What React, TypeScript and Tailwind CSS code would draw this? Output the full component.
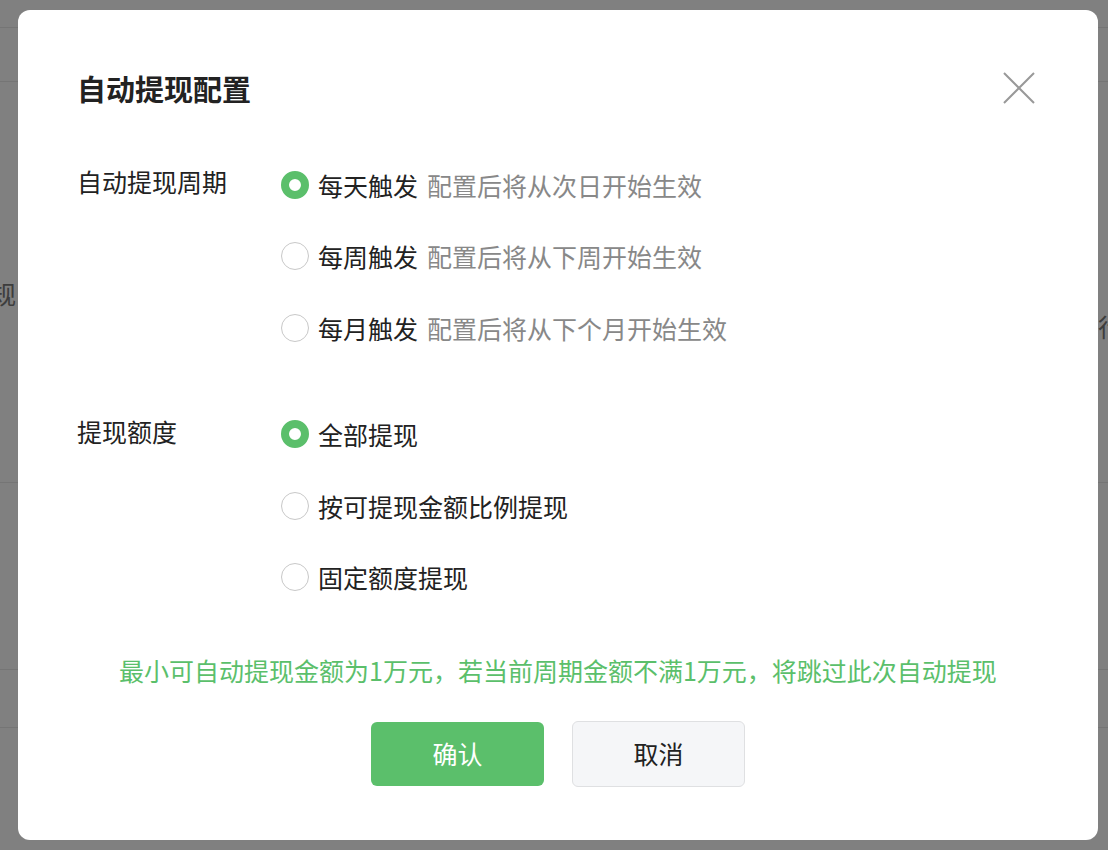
import React, { useState } from 'react'

const font = { fontFamily: '"Noto Sans CJK SC", "Noto Sans", sans-serif' }

const periods = [
  { id: 'day', label: '每天触发', hint: '配置后将从次日开始生效' },
  { id: 'week', label: '每周触发', hint: '配置后将从下周开始生效' },
  { id: 'month', label: '每月触发', hint: '配置后将从下个月开始生效' },
]

const amounts = [
  { id: 'all', label: '全部提现' },
  { id: 'ratio', label: '按可提现金额比例提现' },
  { id: 'fixed', label: '固定额度提现' },
]

const Radio: React.FC<{ checked: boolean }> = ({ checked }) =>
  checked ? (
    <span className="box-border block h-[28px] w-[28px] shrink-0 rounded-full border-[8px] border-[#5bbf6b] bg-white" />
  ) : (
    <span className="box-border block h-[28px] w-[28px] shrink-0 rounded-full border border-[#c8c8c8] bg-white" />
  )

type Option = { id: string; label: string; hint?: string }

const Group: React.FC<{
  title: string
  options: Option[]
  value: string
  onChange: (id: string) => void
}> = ({ title, options, value, onChange }) => (
  <div className="flex pl-[59px]">
    <div className="flex h-[71.5px] w-[204px] shrink-0 items-center pb-[6px] text-[25px] text-[#222]">{title}</div>
    <div className="flex flex-col">
      {options.map((opt) => (
        <button
          key={opt.id}
          onClick={() => onChange(opt.id)}
          className="flex h-[71.5px] items-center text-left"
        >
          <Radio checked={value === opt.id} />
          <span className="ml-[9px] text-[25px] leading-[36px] text-[#222]">{opt.label}</span>
          {opt.hint && <span className="ml-[9px] text-[25px] leading-[36px] text-[#888]">{opt.hint}</span>}
        </button>
      ))}
    </div>
  </div>
)

const App: React.FC = () => {
  const [period, setPeriod] = useState('day')
  const [amount, setAmount] = useState('all')

  return (
    <div className="relative h-[850px] w-full overflow-hidden bg-[#808080]" style={font}>
      {/* dimmed page behind the dialog */}
      <div className="h-[28px] border-b border-[#757575]" />
      <div className="h-[54px] border-b border-[#757575]" />
      <div className="flex h-[401px] justify-between border-b border-[#757575]">
        <div className="ml-[-34px] mt-[196px] text-[25px] leading-[30px] text-[#3d3d3d]">常规</div>
        <div className="mr-[-40px] mt-[229px] w-[50px] text-[25px] leading-[30px] text-[#3d3d3d]">行中</div>
      </div>
      <div className="h-[187px] border-b border-[#757575]" />
      <div className="h-[58px] border-b border-[#757575]" />

      {/* dialog */}
      <div className="absolute left-[18px] top-[10px] flex h-[830px] w-[1080px] flex-col rounded-[12px] bg-white">
        <div className="flex items-center justify-between pl-[59px] pr-[63px] pt-[58px]">
          <h2 className="text-[29px] font-semibold leading-[40px] text-[#222]">自动提现配置</h2>
          <button aria-label="关闭" className="h-[32px] w-[32px]">
            <svg viewBox="0 0 32 32" className="h-[32px] w-[32px]" fill="none" stroke="#999" strokeWidth="2">
              <path d="M1 1 L31 31 M31 1 L1 31" />
            </svg>
          </button>
        </div>

        <div className="mt-[41px]">
          <Group title="自动提现周期" options={periods} value={period} onChange={setPeriod} />
        </div>
        <div className="mt-[35px]">
          <Group title="提现额度" options={amounts} value={amount} onChange={setAmount} />
        </div>

        <p className="mt-[39px] text-center text-[25px] leading-[36px] text-[#5bbf6b]">
          最小可自动提现金额为1万元，若当前周期金额不满1万元，将跳过此次自动提现
        </p>

        <div className="mt-[33px] flex items-center justify-center gap-[28px]">
          <button className="h-[64px] w-[173px] rounded-[6px] bg-[#5bbf6b] text-[25px] text-white">确认</button>
          <button className="h-[66px] w-[173px] rounded-[6px] border border-[#dfe0e2] bg-[#f5f6f8] text-[25px] text-[#222]">
            取消
          </button>
        </div>
      </div>
    </div>
  )
}

export default App
